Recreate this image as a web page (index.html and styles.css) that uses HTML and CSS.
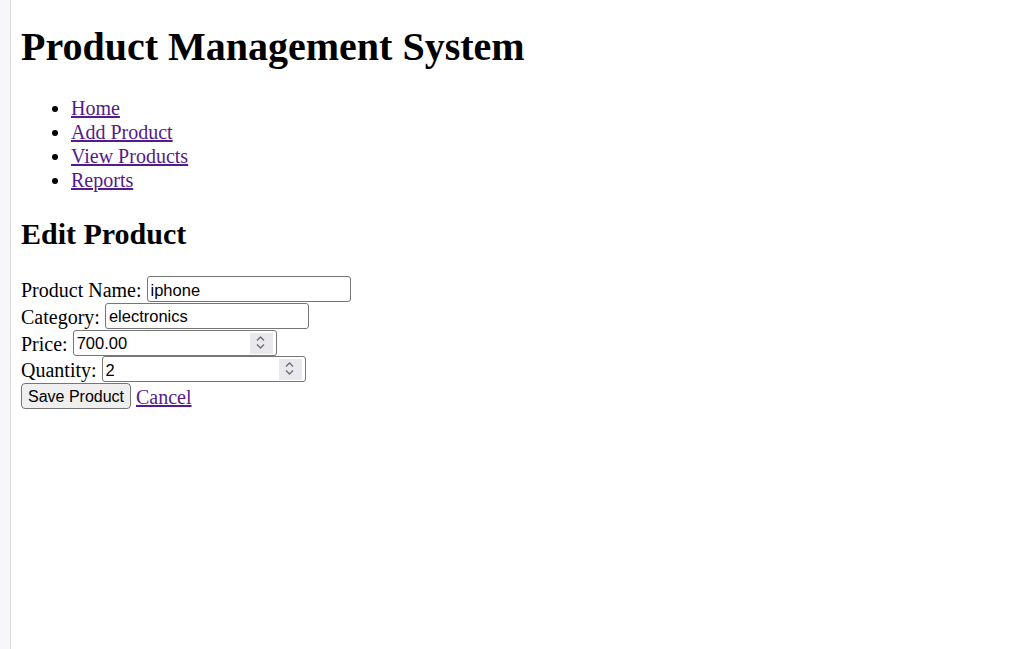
FILE: index.html
```html
<!DOCTYPE html>
<html lang="en">
<head>
    <meta charset="UTF-8">
    <title>Product Management System</title>
    <link rel="stylesheet" href="styles.css">
</head>
<body>
    <div class="frame">
        <div class="edge"></div>
        <div class="page">
            <h1>Product Management System</h1>
            <ul class="nav">
                <li><a href="#">Home</a></li>
                <li><a href="#">Add Product</a></li>
                <li><a href="#">View Products</a></li>
                <li><a href="#">Reports</a></li>
            </ul>

            <h2>Edit Product</h2>
            <form class="edit-form">
                <div class="row">
                    <label>Product Name:</label>
                    <input type="text" class="field" value="iphone">
                </div>
                <div class="row">
                    <label>Category:</label>
                    <input type="text" class="field" value="electronics">
                </div>
                <div class="row">
                    <label>Price:</label>
                    <span class="spin-wrap">
                        <input type="number" class="field" value="700.00" step="0.01">
                        <span class="spinner">
                            <svg width="23" height="21" viewBox="0 0 23 21"><path d="M7 7.5 L10.5 4 L14 7.5 M7 11.5 L10.5 15 L14 11.5" fill="none" stroke="#6e6e72" stroke-width="1.3"/></svg>
                        </span>
                    </span>
                </div>
                <div class="row">
                    <label>Quantity:</label>
                    <span class="spin-wrap">
                        <input type="number" class="field" value="2">
                        <span class="spinner">
                            <svg width="23" height="21" viewBox="0 0 23 21"><path d="M7 7.5 L10.5 4 L14 7.5 M7 11.5 L10.5 15 L14 11.5" fill="none" stroke="#6e6e72" stroke-width="1.3"/></svg>
                        </span>
                    </span>
                </div>
                <div class="row">
                    <button type="button">Save Product</button>
                    <a href="#">Cancel</a>
                </div>
            </form>
        </div>
    </div>
</body>
</html>
```

FILE: styles.css
```css
html, body {
    margin: 0;
    height: 100%;
}

body {
    font-family: "Liberation Serif", serif;
    font-size: 20px;
}

.frame {
    display: flex;
    min-height: 100%;
}

.edge {
    width: 10px;
    background-color: #f7f7f9;
    border-right: 1px solid #dcdce0;
}

.page {
    flex: 1;
    padding: 0 10px;
}

h1 {
    font-size: 40px;
    line-height: 46px;
    margin: 24px 0 26px;
}

.nav {
    margin: 0;
    padding-left: 50px;
}

.nav li {
    line-height: 24px;
}

h2 {
    font-size: 30px;
    line-height: 34px;
    margin: 25px 0 25px;
}

a {
    color: #551a8b;
}

.row {
    display: flex;
    align-items: flex-start;
    gap: 5px;
    height: 26.75px;
}

.row label,
.row a {
    line-height: 26px;
    padding-top: 1px;
}

.field {
    width: 204px;
    height: 26px;
    box-sizing: border-box;
    font-family: "Liberation Sans", sans-serif;
    font-size: 16.5px;
    padding: 2px 3px 0;
    border: 1px solid #767676;
    border-radius: 3px;
    margin: 0;
}

.field::-webkit-inner-spin-button,
.field::-webkit-outer-spin-button {
    -webkit-appearance: none;
    margin: 0;
}

.spin-wrap {
    position: relative;
    display: block;
}

.spinner {
    position: absolute;
    top: 3px;
    right: 4px;
    width: 23px;
    height: 21px;
    background-color: #e9e9ed;
    display: block;
}

.spinner svg {
    display: block;
}

button {
    width: 110px;
    height: 26px;
    font-family: "Liberation Sans", sans-serif;
    font-size: 16px;
    padding: 2px 0 0;
    margin: 0;
    border: 1px solid #767676;
    border-radius: 4px;
    background-color: #efefef;
    color: #000;
}
```
